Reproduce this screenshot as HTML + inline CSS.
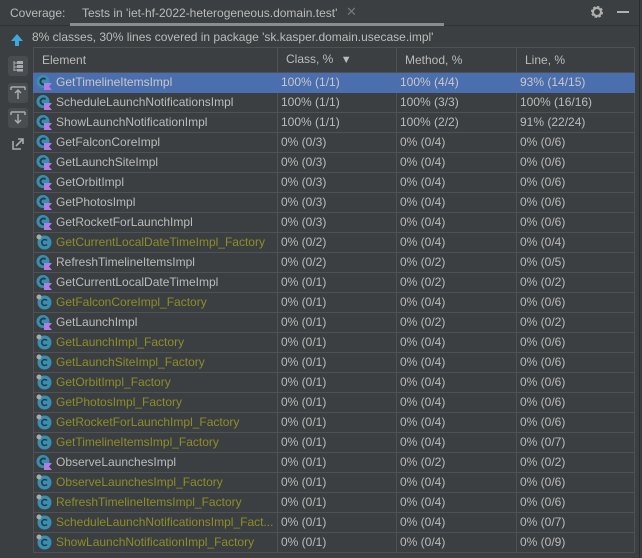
<!DOCTYPE html><html><head><style>
*{margin:0;padding:0;box-sizing:border-box}
body{width:642px;height:558px;background:#3c3f41;font-family:"Liberation Sans",sans-serif;font-size:12px;color:#bbbbbb;position:relative;overflow:hidden}
.tabbar{position:absolute;left:0;top:0;width:639px;height:26px;border-bottom:1px solid #323232}
.abs{position:absolute;white-space:nowrap}
table{position:absolute;left:33px;top:47px;border-collapse:collapse;table-layout:fixed;width:601px}
td,th{border:1px solid #4f5254;height:20px;padding:0 0 0 3px;font-weight:normal;text-align:left;white-space:nowrap;overflow:hidden;line-height:19px}
th{height:25px;padding-left:8px;background:#3c3f41}
td:first-child{padding-left:2px}
tr.sel td{background:#4b6eaf;color:#c8c8c8;border-color:#4b6eaf}
tr.sel td+td{border-left-color:#3b5a90}
.ic{display:inline-block;width:16px;height:16px;vertical-align:middle;margin-right:4px;margin-top:-2px}
.f{color:#8e8e25}
.sb{position:absolute;left:8px;width:20px;height:20px;border-radius:3px;background:#4a4d50}
</style></head><body>
<div class="tabbar"></div>
<div class="abs" style="left:10px;top:6px;color:#bbb">Coverage:</div>
<div class="abs" style="left:82px;top:6px;color:#bbb">Tests in 'iet-hf-2022-heterogeneous.domain.test'</div>
<div class="abs" style="left:346px;top:4px;color:#777;font-size:13px">✕</div>
<div class="abs" style="left:70px;top:23px;width:374px;height:3px;background:#8a8d90"></div>
<svg class="abs" style="left:590px;top:5px" width="14" height="14" viewBox="0 0 14 14"><circle cx="7" cy="7" r="4.5" fill="none" stroke="#b0b0b0" stroke-width="3" stroke-dasharray="2.2 1.3"/><circle cx="7" cy="7" r="4" fill="none" stroke="#b0b0b0" stroke-width="2"/></svg>
<div class="abs" style="left:617px;top:11px;width:12px;height:2px;background:#b0b0b0"></div>
<div class="abs" style="left:639px;top:0;width:1px;height:558px;background:#2b2b2b"></div>
<svg class="abs" style="left:10px;top:33px" width="14" height="14"><path d="M7 1 L13 8 H9 V13 H5 V8 H1Z" fill="#3ea8de"/></svg>
<div class="abs" style="left:32px;top:30px">8% classes, 30% lines covered in package 'sk.kasper.domain.usecase.impl'</div>
<div class="sb" style="top:56px"></div>
<svg class="abs" style="left:12px;top:60px" width="12" height="12"><path d="M2 1v10M2 3h3M2 7h3M2 10h3" stroke="#aaa" fill="none"/><rect x="5" y="1" width="6" height="3" fill="#aaa"/><rect x="5" y="5" width="6" height="3" fill="#aaa"/><rect x="5" y="9" width="6" height="2.5" fill="#aaa"/></svg>
<div class="sb" style="top:83px"></div>
<svg class="abs" style="left:10px;top:86px" width="16" height="14"><path d="M1 1h14M1 1v3M15 1v3M8 4v9M5 7l3-3 3 3" stroke="#aaa" fill="none" stroke-width="1.5"/></svg>
<div class="sb" style="top:108px"></div>
<svg class="abs" style="left:10px;top:111px" width="16" height="14"><path d="M1 1h14M1 1v3M15 1v3M8 3v9M5 9l3 3 3-3" stroke="#aaa" fill="none" stroke-width="1.5"/></svg>
<svg class="abs" style="left:11px;top:137px" width="14" height="14"><path d="M2 4v8h8M5 9l7-7M7 2h5v5" stroke="#aaa" fill="none" stroke-width="1.6"/></svg>
<table>
<colgroup><col style="width:244px"><col style="width:119px"><col style="width:120px"><col style="width:118px"></colgroup>
<tr><th>Element</th><th>Class, % <span style="font-size:11px;color:#bbb;margin-left:4px">▼</span></th><th>Method, %</th><th>Line, %</th></tr>
<tbody id="b"></tbody>
</table>
<script>
var K='<svg class="ic" viewBox="0 0 16 16"><circle cx="7" cy="7.5" r="6.5" fill="#3a8fb0"/><path d="M9.5 5.3A3 3 0 1 0 9.5 9.7" stroke="#1f3e4c" stroke-width="2" fill="none"/><path d="M8 9h8l-3 3.5 3 3.5h-8z" fill="#b07ee5"/></svg>';
var F='<svg class="ic" viewBox="0 0 16 16"><circle cx="8.5" cy="8.5" r="7" fill="#3a8fb0"/><path d="M11 6.5A3 3 0 1 0 11 10.5" stroke="#1f3e4c" stroke-width="1.6" fill="none"/><circle cx="3" cy="3" r="2.5" fill="#aaa"/></svg>';
var d=[
["GetTimelineItemsImpl",0,"100% (1/1)","100% (4/4)","93% (14/15)"],
["ScheduleLaunchNotificationsImpl",0,"100% (1/1)","100% (3/3)","100% (16/16)"],
["ShowLaunchNotificationImpl",0,"100% (1/1)","100% (2/2)","91% (22/24)"],
["GetFalconCoreImpl",0,"0% (0/3)","0% (0/4)","0% (0/6)"],
["GetLaunchSiteImpl",0,"0% (0/3)","0% (0/4)","0% (0/6)"],
["GetOrbitImpl",0,"0% (0/3)","0% (0/4)","0% (0/6)"],
["GetPhotosImpl",0,"0% (0/3)","0% (0/4)","0% (0/6)"],
["GetRocketForLaunchImpl",0,"0% (0/3)","0% (0/4)","0% (0/6)"],
["GetCurrentLocalDateTimeImpl_Factory",1,"0% (0/2)","0% (0/4)","0% (0/4)"],
["RefreshTimelineItemsImpl",0,"0% (0/2)","0% (0/2)","0% (0/5)"],
["GetCurrentLocalDateTimeImpl",0,"0% (0/1)","0% (0/2)","0% (0/2)"],
["GetFalconCoreImpl_Factory",1,"0% (0/1)","0% (0/4)","0% (0/6)"],
["GetLaunchImpl",0,"0% (0/1)","0% (0/2)","0% (0/2)"],
["GetLaunchImpl_Factory",1,"0% (0/1)","0% (0/4)","0% (0/6)"],
["GetLaunchSiteImpl_Factory",1,"0% (0/1)","0% (0/4)","0% (0/6)"],
["GetOrbitImpl_Factory",1,"0% (0/1)","0% (0/4)","0% (0/6)"],
["GetPhotosImpl_Factory",1,"0% (0/1)","0% (0/4)","0% (0/6)"],
["GetRocketForLaunchImpl_Factory",1,"0% (0/1)","0% (0/4)","0% (0/6)"],
["GetTimelineItemsImpl_Factory",1,"0% (0/1)","0% (0/4)","0% (0/7)"],
["ObserveLaunchesImpl",0,"0% (0/1)","0% (0/2)","0% (0/2)"],
["ObserveLaunchesImpl_Factory",1,"0% (0/1)","0% (0/4)","0% (0/6)"],
["RefreshTimelineItemsImpl_Factory",1,"0% (0/1)","0% (0/4)","0% (0/6)"],
["ScheduleLaunchNotificationsImpl_Fact...",1,"0% (0/1)","0% (0/4)","0% (0/7)"],
["ShowLaunchNotificationImpl_Factory",1,"0% (0/1)","0% (0/4)","0% (0/9)"]];
var h='';d.forEach(function(r,i){h+='<tr'+(i==0?' class="sel"':'')+'><td>'+(r[1]?F:K)+'<span'+(r[1]?' class="f"':'')+'>'+r[0]+'</span></td><td>'+r[2]+'</td><td>'+r[3]+'</td><td>'+r[4]+'</td></tr>';});
document.getElementById('b').innerHTML=h;
</script>
</body></html>
